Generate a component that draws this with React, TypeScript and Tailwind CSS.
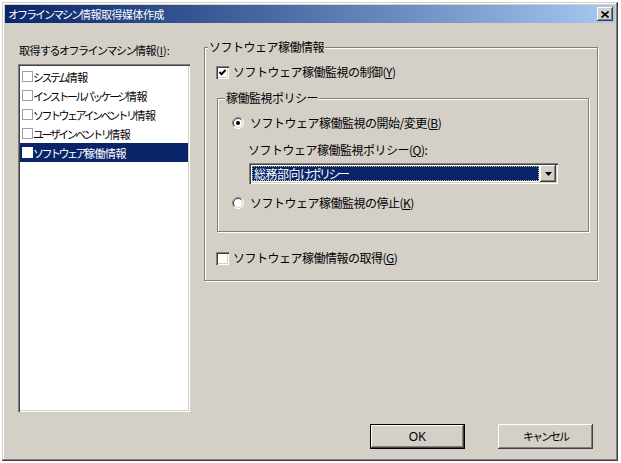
import React from "react";

const FONT = '"Noto Sans CJK JP", "Noto Sans", sans-serif';

const raised =
  "shadow-[inset_-1px_-1px_0_#404040,inset_1px_1px_0_#ffffff,inset_-2px_-2px_0_#808080,inset_2px_2px_0_#d4d0c8]";
const sunken =
  "shadow-[inset_1px_1px_0_#808080,inset_2px_2px_0_#404040,inset_-1px_-1px_0_#ffffff,inset_-2px_-2px_0_#d4d0c8]";
const etched = "border border-[#808080] shadow-[1px_1px_0_#ffffff,inset_1px_1px_0_#ffffff]";

// Renders kana runs tighter than kanji runs, imitating the proportional bitmap UI font.
function Tight({ text, kana, kanji }: { text: string; kana: string; kanji: string }) {
  const runs: { s: string; k: boolean }[] = [];
  for (const ch of text) {
    const k = /[\u4e00-\u9fff]/.test(ch);
    const last = runs[runs.length - 1];
    if (last && last.k === k) last.s += ch;
    else runs.push({ s: ch, k });
  }
  return (
    <>
      {runs.map((r, i) => (
        <span key={i} className={r.k ? kanji : kana}>
          {r.s}
        </span>
      ))}
    </>
  );
}

function Check({ checked }: { checked?: boolean }) {
  return (
    <span className={`inline-block w-[13px] h-[13px] bg-white shrink-0 ${sunken} relative`}>
      {checked && (
        <svg width="13" height="13" className="absolute left-0 top-0">
          <path d="M3.5 6 L5.5 8.2 L9.5 4" stroke="#000" strokeWidth="2" fill="none" />
        </svg>
      )}
    </span>
  );
}

function Radio({ checked }: { checked?: boolean }) {
  return (
    <svg width="12" height="12" className="shrink-0">
      <circle cx="6" cy="6" r="5.5" fill="#fff" />
      <path d="M2.1 9.9 A5.5 5.5 0 0 1 9.9 2.1" stroke="#808080" fill="none" />
      <path d="M9.9 2.1 A5.5 5.5 0 0 1 2.1 9.9" stroke="#ffffff" fill="none" />
      <path d="M2.8 9.2 A4.5 4.5 0 0 1 9.2 2.8" stroke="#404040" fill="none" />
      <path d="M9.2 2.8 A4.5 4.5 0 0 1 2.8 9.2" stroke="#d4d0c8" fill="none" />
      {checked && <circle cx="6" cy="6" r="2" fill="#000" />}
    </svg>
  );
}

const listItems = [
  "システム情報",
  "インストールパッケージ情報",
  "ソフトウェアインベントリ情報",
  "ユーザインベントリ情報",
  "ソフトウェア稼働情報",
];

export default function App() {
  return (
    <div className="w-[621px] h-[463px] bg-white pt-[2px] pl-[2px]" style={{ fontFamily: FONT }}>
      <div
        className={`w-[616px] h-[459px] bg-[#d4d0c8] p-[3px] flex flex-col shadow-[inset_-1px_-1px_0_#404040,inset_1px_1px_0_#d4d0c8,inset_-2px_-2px_0_#808080,inset_2px_2px_0_#ffffff]`}
      >
        {/* Title bar */}
        <div className="h-[18px] bg-linear-to-r from-[#0a246a] to-[#a6caf0] flex items-center pl-[3px] pr-[2px]">
          <span className="text-white text-[11px] leading-[14px] whitespace-nowrap">
            <Tight text="オフラインマシン情報取得媒体作成" kana="tracking-[-2px]" kanji="tracking-[-0.5px]" />
          </span>
          <div className={`ml-auto w-[16px] h-[14px] bg-[#d4d0c8] ${raised} flex items-center justify-center`}>
            <svg width="8" height="7">
              <path d="M0.5 0.5 L7.5 6.5 M7.5 0.5 L0.5 6.5" stroke="#000" strokeWidth="1.6" />
            </svg>
          </div>
        </div>

        {/* Body */}
        <div className="flex flex-row text-black">
          {/* Left column */}
          <div className="ml-[13px] w-[172px] flex flex-col">
            <div className="mt-[20px] h-[14px] text-[11px] leading-[14px] whitespace-nowrap pl-[1px]">
              <Tight text="取得するオフラインマシン情報" kana="tracking-[-1.5px]" kanji="tracking-[-0.5px]" />
              (<span className="underline">I</span>):
            </div>
            <div className={`mt-[7px] h-[348px] bg-white ${sunken} p-[2px] pt-[3px]`}>
              {listItems.map((t, i) => {
                const sel = i === 4;
                return (
                  <div
                    key={t}
                    className={`h-[19px] flex items-center ${sel ? "bg-[#0a246a] text-white" : ""}`}
                  >
                    <span
                      className={`ml-[2px] w-[11px] h-[11px] shrink-0 bg-white border ${sel ? "border-white" : "border-[#a0a0a0]"}`}
                    />
                    <span className="text-[11px] leading-[14px] whitespace-nowrap">
                      <Tight text={t} kana="tracking-[-2.5px]" kanji="tracking-[-0.5px]" />
                    </span>
                  </div>
                );
              })}
            </div>
          </div>

          {/* Right column */}
          <div className="ml-[14px] w-[394px] flex flex-col pt-[24px]">
            <div className={`h-[234px] ${etched} flex flex-col text-[12px] leading-[14px] tracking-[-0.5px]`}>
              <div className="-mt-[8px] ml-[3px] px-[1px] bg-[#d4d0c8] w-fit whitespace-nowrap">
                ソフトウェア稼働情報
              </div>
              <div className="mt-[11px] ml-[11px] flex items-center h-[14px]">
                <Check checked />
                <span className="ml-[4px] whitespace-nowrap">
                  ソフトウェア稼働監視の制御(<span className="underline">Y</span>)
                </span>
              </div>

              <div className={`mt-[19px] ml-[12px] w-[372px] h-[134px] ${etched} flex flex-col`}>
                <div className="-mt-[8px] ml-[7px] px-[1px] bg-[#d4d0c8] w-fit whitespace-nowrap">
                  稼働監視ポリシー
                </div>
                <div className="mt-[11px] ml-[14px] flex items-center h-[14px]">
                  <Radio checked />
                  <span className="ml-[6px] whitespace-nowrap">
                    ソフトウェア稼働監視の開始/変更(<span className="underline">B</span>)
                  </span>
                </div>
                <div className="mt-[13px] ml-[30px] h-[14px] whitespace-nowrap">
                  ソフトウェア稼働監視ポリシー(<span className="underline">Q</span>):
                </div>
                <div className={`mt-[6px] ml-[31px] w-[309px] h-[21px] bg-white ${sunken} p-[2px] flex`}>
                  <div className="flex-1 m-[1px] bg-[#0a246a] text-white outline-1 outline-dotted outline-[#c8c080] -outline-offset-1 flex items-center pl-[2px] text-[12px] whitespace-nowrap">
                    <Tight text="総務部向けポリシー" kana="tracking-[-2.5px]" kanji="tracking-[-0.5px]" />
                  </div>
                  <div className={`w-[16px] h-[17px] bg-[#d4d0c8] ${raised} flex items-center justify-center`}>
                    <svg width="7" height="4">
                      <path d="M0 0 H7 L3.5 4 Z" fill="#000" />
                    </svg>
                  </div>
                </div>
                <div className="mt-[12px] ml-[14px] flex items-center h-[14px]">
                  <Radio />
                  <span className="ml-[6px] whitespace-nowrap">
                    ソフトウェア稼働監視の停止(<span className="underline">K</span>)
                  </span>
                </div>
              </div>

              <div className="mt-[19px] ml-[11px] flex items-center h-[14px]">
                <Check />
                <span className="ml-[4px] whitespace-nowrap">
                  ソフトウェア稼働情報の取得(<span className="underline">G</span>)
                </span>
              </div>
            </div>
          </div>
        </div>

        {/* Buttons */}
        <div className="mt-[12px] flex flex-row justify-end pr-[22px] gap-[33px]">
          <div className="w-[95px] h-[25px] border border-black">
            <div
              className={`w-full h-full bg-[#d4d0c8] ${raised} flex items-center justify-center text-[12px] text-black`}
              style={{ fontFamily: '"Liberation Sans", Arial, sans-serif' }}
            >
              OK
            </div>
          </div>
          <div
            className={`w-[95px] h-[25px] bg-[#d4d0c8] ${raised} flex items-center justify-center text-[11px] tracking-[-2px] text-black`}
          >
            キャンセル
          </div>
        </div>
      </div>
    </div>
  );
}
